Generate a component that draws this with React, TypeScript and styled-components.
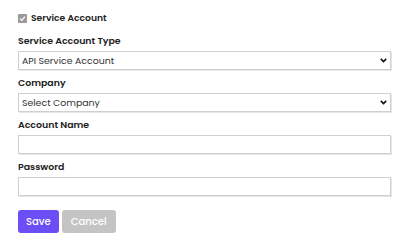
import React from "react";
import styled, { createGlobalStyle } from "styled-components";

const Global = createGlobalStyle`
  html, body { margin: 0; padding: 0; background: #fff; }
  body { font-family: "Poppins", "Open Sans", "Noto Sans", sans-serif; color: #222; }
`;

const Form = styled.form`
  width: 373px;
  padding: 10px 0 0 18px;
  display: flex;
  flex-direction: column;
`;

const CheckRow = styled.label`
  display: flex;
  align-items: center;
  gap: 4px;
  height: 16px;
  font-size: 9.2px;
  font-weight: 600;
  color: #222;
  margin-bottom: 7px;
`;

const CheckBox = styled.span`
  width: 9px;
  height: 9px;
  border-radius: 1px;
  background: #9a9a9a;
  display: flex;
  align-items: center;
  justify-content: center;
`;

const Field = styled.div`
  display: flex;
  flex-direction: column;
  margin-bottom: 5px;
`;

const Label = styled.label`
  font-size: 9.4px;
  font-weight: 600;
  line-height: 16px;
  color: #222;
  margin-bottom: 2px;
`;

const SelectWrap = styled.div`
  position: relative;
  width: 100%;
`;

const Select = styled.select`
  appearance: none;
  -webkit-appearance: none;
  display: block;
  height: 19px;
  width: 100%;
  box-sizing: border-box;
  border: 1px solid #cfcfcf;
  border-radius: 0;
  box-shadow: 1px 1px 0 #e6e6e6;
  background: #fff;
  font-family: inherit;
  font-size: 9.4px;
  color: #333;
  padding: 0 0 0 3px;
  outline: none;
`;

const Chevron = styled.svg`
  position: absolute;
  right: 4px;
  top: 7px;
  pointer-events: none;
`;

const Input = styled.input`
  display: block;
  height: 19px;
  width: 100%;
  box-sizing: border-box;
  border: 1px solid #cfcfcf;
  border-radius: 0;
  box-shadow: 1px 1px 0 #e6e6e6;
  background: #fff;
  padding: 0 3px;
  outline: none;
`;

const Buttons = styled.div`
  display: flex;
  gap: 3px;
  margin-top: 9px;
`;

const Button = styled.button<{ $variant: "primary" | "muted" }>`
  height: 23px;
  padding: 0 ${(p) => (p.$variant === "primary" ? "8px" : "9px")};
  border: none;
  border-radius: 3px;
  font-family: inherit;
  font-size: 10px;
  font-weight: 500;
  color: #fff;
  background: ${(p) => (p.$variant === "primary" ? "#6b4ef6" : "#c4c4c4")};
  cursor: pointer;
`;

const SelectField = ({ value, label }: { value: string; label: string }) => (
  <SelectWrap>
    <Select defaultValue={value}>
      <option value={value}>{label}</option>
    </Select>
    <Chevron width="7" height="5" viewBox="0 0 7 5">
      <path d="M0.8 0.9 L3.5 3.6 L6.2 0.9" fill="none" stroke="#111" strokeWidth="1.6" />
    </Chevron>
  </SelectWrap>
);

export default function App() {
  return (
    <>
      <Global />
      <Form onSubmit={(e) => e.preventDefault()}>
        <CheckRow>
          <CheckBox>
            <svg width="7" height="7" viewBox="0 0 10 10">
              <path d="M1.5 5.2 L4 7.6 L8.6 2.4" fill="none" stroke="#fff" strokeWidth="1.8" />
            </svg>
          </CheckBox>
          Service Account
        </CheckRow>
        <Field>
          <Label>Service Account Type</Label>
          <SelectField value="api" label="API Service Account" />
        </Field>
        <Field>
          <Label>Company</Label>
          <SelectField value="" label="Select Company" />
        </Field>
        <Field>
          <Label>Account Name</Label>
          <Input type="text" />
        </Field>
        <Field>
          <Label>Password</Label>
          <Input type="password" />
        </Field>
        <Buttons>
          <Button $variant="primary" type="submit">Save</Button>
          <Button $variant="muted" type="button">Cancel</Button>
        </Buttons>
      </Form>
    </>
  );
}
